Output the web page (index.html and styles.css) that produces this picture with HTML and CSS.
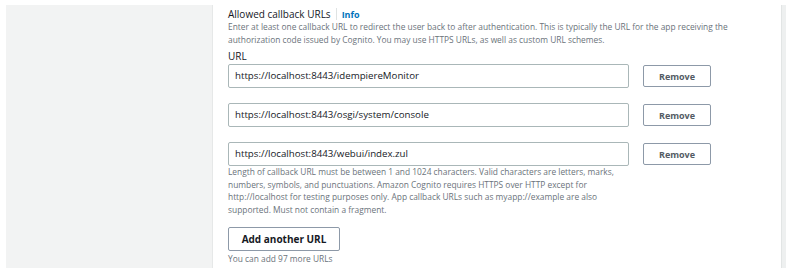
FILE: index.html
```html
<!DOCTYPE html>
<html>
<head>
<meta charset="utf-8">
<link rel="stylesheet" href="styles.css">
</head>
<body>
<div class="page">
  <aside class="side"></aside>
  <main class="content">
    <div class="label-row">
      <span class="label">Allowed callback URLs</span>
      <span class="sep"></span>
      <a class="info">Info</a>
    </div>
    <p class="desc">Enter at least one callback URL to redirect the user back to after authentication. This is typically the URL for the app receiving the authorization code issued by Cognito. You may use HTTPS URLs, as well as custom URL schemes.</p>
    <div class="sub-label">URL</div>
    <div class="rows">
      <div class="row">
        <div class="input">https://localhost:8443/idempiereMonitor</div>
        <button class="btn small">Remove</button>
      </div>
      <div class="row">
        <div class="input">https://localhost:8443/osgi/system/console</div>
        <button class="btn small">Remove</button>
      </div>
      <div class="row">
        <div class="input">https://localhost:8443/webui/index.zul</div>
        <button class="btn small">Remove</button>
      </div>
    </div>
    <p class="hint">Length of callback URL must be between 1 and 1024 characters. Valid characters are letters, marks, numbers, symbols, and punctuations. Amazon Cognito requires HTTPS over HTTP except for http://localhost for testing purposes only. App callback URLs such as myapp://example are also supported. Must not contain a fragment.</p>
    <button class="btn add">Add another URL</button>
    <p class="foot">You can add 97 more URLs</p>
  </main>
  <div class="rail"></div>
</div>
</body>
</html>
```
FILE: styles.css
```css
html, body {
  margin: 0;
  padding: 0;
  background: #ffffff;
  font-family: "Open Sans", "Liberation Sans", sans-serif;
  color: #16191f;
}
.page {
  display: flex;
  height: 268px;
  padding-top: 5px;
  box-sizing: border-box;
  overflow: hidden;
}
.side {
  width: 206px;
  margin-left: 6px;
  background: #f2f3f3;
  border-right: 1px solid #e6e8e8;
  flex: none;
}
.content {
  flex: 1;
  padding-left: 15px;
  padding-top: 2px;
}
.rail {
  width: 4px;
  background: #eef0f0;
  border-left: 1px solid #e2e5e5;
  flex: none;
}
.label-row {
  display: flex;
  align-items: center;
  height: 14px;
}
.label {
  font-size: 10px;
  color: #16191f;
}
.sep {
  width: 1px;
  height: 12px;
  background: #dfe3e3;
  margin: 0 5px 0 5px;
}
.info {
  font-size: 9px;
  font-weight: 700;
  color: #0073bb;
}
.desc {
  margin: 0;
  font-size: 8.4px;
  line-height: 12.5px;
  color: #6b737b;
  width: 520px;
}
.sub-label {
  margin-top: 3px;
  font-size: 10px;
  line-height: 14px;
  color: #16191f;
}
.rows {
  margin-top: 1px;
  display: flex;
  flex-direction: column;
  gap: 15px;
}
.row {
  display: flex;
  align-items: center;
  gap: 14px;
}
.input {
  width: 401px;
  height: 24px;
  box-sizing: border-box;
  border: 1px solid #aab7b8;
  border-radius: 2px;
  padding: 0 6px;
  font-size: 9.7px;
  line-height: 22px;
  color: #16191f;
}
.btn {
  background: #fff;
  border: 1px solid #8d99a8;
  border-radius: 2px;
  font-family: inherit;
  font-weight: 700;
  color: #545b64;
  padding: 0;
  box-sizing: border-box;
}
.small {
  width: 68px;
  height: 22px;
  font-size: 9px;
}
.hint {
  margin: 0;
  width: 410px;
  font-size: 8.4px;
  line-height: 12.5px;
  color: #6b737b;
}
.add {
  display: block;
  margin-top: 11px;
  width: 112px;
  height: 24px;
  font-size: 10px;
  color: #16191f;
}
.foot {
  margin: 2px 0 0;
  font-size: 8.4px;
  line-height: 12px;
  color: #6b737b;
}
```
